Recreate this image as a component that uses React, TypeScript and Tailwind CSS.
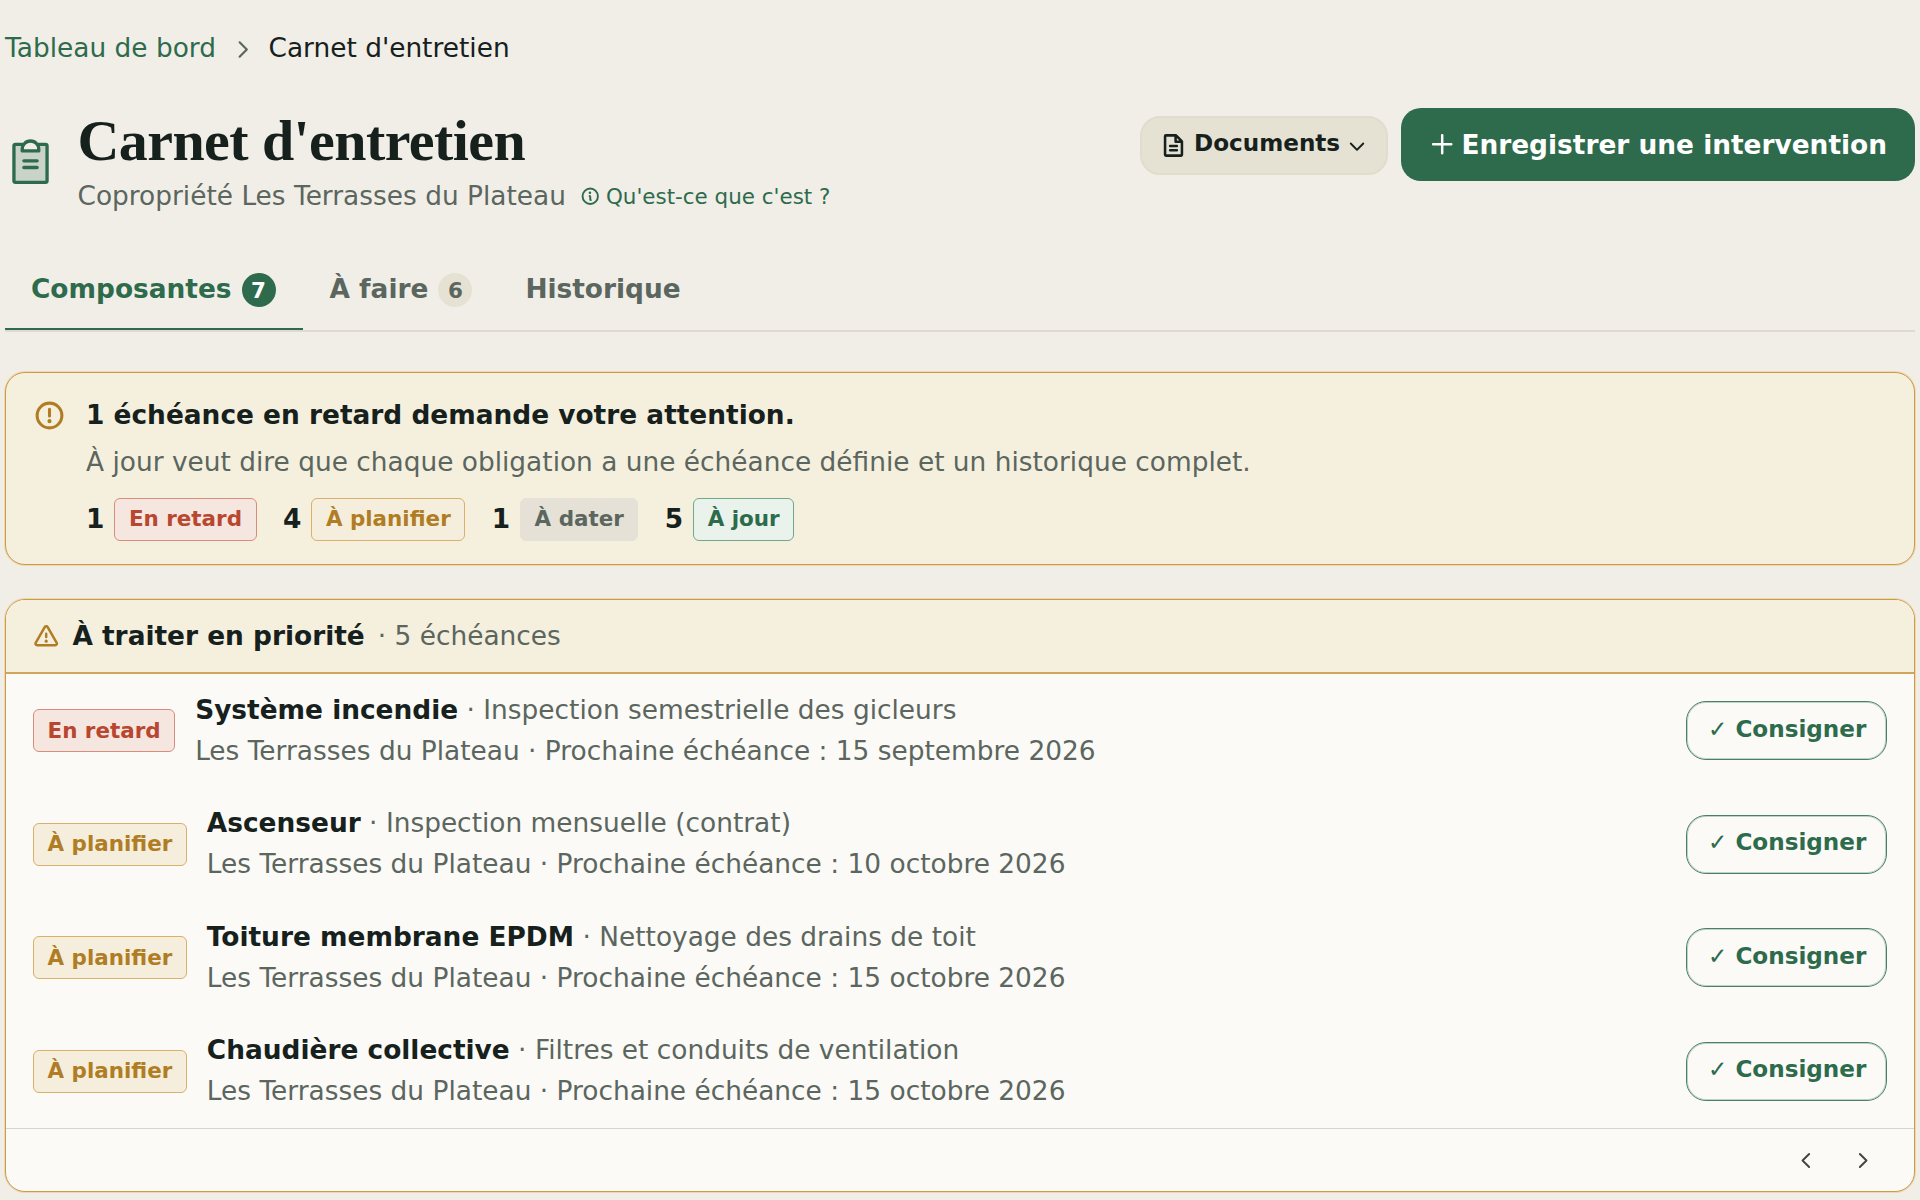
import React from 'react';
import {
  PiCaretDownBold,
  PiCaretLeftBold,
  PiCaretRightBold,
  PiClipboardTextDuotone,
  PiFileTextBold,
  PiInfoBold,
  PiPlusBold,
  PiWarningBold,
  PiWarningCircleBold,
} from 'react-icons/pi';

type Status = 'late' | 'plan' | 'date' | 'ok';

const badgeStyles: Record<Status, string> = {
  late: 'bg-[#f6e6e0] border-[#d98b7c] text-[#b8472f]',
  plan: 'bg-[#f5eedc] border-[#dab06a] text-[#b07d24]',
  date: 'bg-[#e6e1d6] border-[#e6e1d6] text-[#5b665f]',
  ok: 'bg-[#e9f2eb] border-[#6fa88b] text-[#2d6b4c]',
};

const badgeLabels: Record<Status, string> = {
  late: 'En retard',
  plan: 'À planifier',
  date: 'À dater',
  ok: 'À jour',
};

function Badge({ status }: { status: Status }) {
  return (
    <span
      className={`inline-flex h-[43px] shrink-0 items-center rounded-[6px] border px-[13.5px] pb-[1px] text-[21.45px] font-bold leading-none ${badgeStyles[status]}`}
    >
      {badgeLabels[status]}
    </span>
  );
}

const summary: { count: number; status: Status }[] = [
  { count: 1, status: 'late' },
  { count: 4, status: 'plan' },
  { count: 1, status: 'date' },
  { count: 5, status: 'ok' },
];

const rows: { status: Status; name: string; task: string; due: string }[] = [
  { status: 'late', name: 'Système incendie', task: 'Inspection semestrielle des gicleurs', due: '15 septembre 2026' },
  { status: 'plan', name: 'Ascenseur', task: 'Inspection mensuelle (contrat)', due: '10 octobre 2026' },
  { status: 'plan', name: 'Toiture membrane EPDM', task: 'Nettoyage des drains de toit', due: '15 octobre 2026' },
  { status: 'plan', name: 'Chaudière collective', task: 'Filtres et conduits de ventilation', due: '15 octobre 2026' },
];

export default function App() {
  return (
    <div className="h-[1200px] w-[1920px] overflow-hidden whitespace-nowrap bg-[#f1eee8] pl-[5px] pr-[5px] font-['DejaVu_Sans',sans-serif] text-[26.4px] leading-[41px] text-[#16211d]">
      {/* Fil d'Ariane */}
      <nav className="flex h-[108px] items-start pt-[27px]">
        <a className="text-[#2d6b4c]">Tableau de bord</a>
        <PiCaretRightBold className="ml-[15px] mr-[14.5px] mt-[11px] size-[23px] text-[#5b665f]" />
        <span>Carnet d'entretien</span>
      </nav>

      {/* En-tête */}
      <header className="flex h-[152px] items-start">
        <PiClipboardTextDuotone className="-ml-[1px] mt-[28px] size-[53px] text-[#2d6b4c]" />
        <div className="ml-[20.5px]">
          <h1 className="-mt-[1px] font-['Liberation_Serif',serif] text-[58px] font-bold leading-[68px] tracking-[-0.01em]">
            Carnet d'entretien
          </h1>
          <div className="-mt-[1px] flex items-center text-[#5b665f]">
            <span>Copropriété Les Terrasses du Plateau</span>
            <span className="ml-[14px] mt-[2px] flex items-center gap-[5.5px] text-[21.45px] text-[#2d6b4c]">
              <PiInfoBold className="size-[20.5px]" />
              Qu'est-ce que c'est ?
            </span>
          </div>
        </div>
        <div className="ml-auto flex gap-[13px]">
          <button className="mt-[8px] flex h-[59px] w-[248px] items-center rounded-[20px] border-2 border-[#e1ddcc] bg-[#e5e1d3] pl-[18px] text-[23.1px] font-bold">
            <PiFileTextBold className="mr-[7px] size-[27px]" />
            <span className="-mt-[4px]">Documents</span>
            <PiCaretDownBold className="ml-[7px] size-[20px]" />
          </button>
          <button className="flex h-[73px] w-[514px] items-center rounded-[20px] bg-[#2d6b4c] pl-[28px] font-bold text-white">
            <PiPlusBold className="mr-[6px] size-[26.4px]" />
            Enregistrer une intervention
          </button>
        </div>
      </header>

      {/* Onglets */}
      <div className="flex h-[72px] border-b-2 border-[#dfdacd] font-bold text-[#5b665f]">
        <div className="flex h-[70px] w-[298px] items-start border-b-2 border-[#2d6b4c] pl-[26px] pt-[8px] text-[#2d6b4c]">
          Composantes
          <span className="ml-[10px] mt-[5px] flex size-[34px] items-center justify-center rounded-full bg-[#2d6b4c] text-[21.45px] text-white">7</span>
        </div>
        <div className="flex items-start pl-[26.5px] pt-[8px]">
          À faire
          <span className="ml-[10px] mt-[5px] flex size-[34px] items-center justify-center rounded-full bg-[#e5e1d3] text-[21.45px]">6</span>
        </div>
        <div className="pl-[53px] pt-[8px]">Historique</div>
      </div>

      {/* Alerte */}
      <section className="mt-[40px] flex h-[193px] rounded-[20px] border border-[#cf9a46] bg-[#f5f0de] pl-[27px] pt-[21px] shadow-[0_0_0_1px_#ead8b6]">
        <PiWarningCircleBold className="mt-[5px] size-[33px] text-[#b07d24]" />
        <div className="ml-[20px]">
          <p className="font-bold">1 échéance en retard demande votre attention.</p>
          <p className="mt-[6px] text-[#5b665f]">
            À jour veut dire que chaque obligation a une échéance définie et un historique complet.
          </p>
          <div className="mt-[16px] flex gap-[26.5px]">
            {summary.map(({ count, status }) => (
              <div key={status} className="flex items-center gap-[10px]">
                <b className="-mt-[2px]">{count}</b>
                <Badge status={status} />
              </div>
            ))}
          </div>
        </div>
      </section>

      {/* Priorités */}
      <section className="mt-[34px] h-[593px] overflow-hidden rounded-[20px] border border-[#cf9a46] bg-[#fcfaf6] shadow-[0_0_0_1px_#ead8b6]">
        <div className="flex h-[74px] items-center border-b-2 border-[#d3a55a] bg-[#f5efde] pb-[1px] pl-[27px]">
          <PiWarningBold className="mr-[13px] mt-[1px] size-[26.4px] text-[#b07d24]" />
          <b>À traiter en priorité</b>
          <span className="ml-[13px] text-[#5b665f]">· 5 échéances</span>
        </div>
        {rows.map(({ status, name, task, due }) => (
          <div key={name} className="flex h-[113.5px] items-center pl-[27px] pr-[27px]">
            <Badge status={status} />
            <div className="-mt-[2px] ml-[20px] text-[#5b665f]">
              <p>
                <b className="text-[#16211d]">{name}</b> · {task}
              </p>
              <p>Les Terrasses du Plateau · Prochaine échéance : {due}</p>
            </div>
            <button className="ml-auto flex h-[59px] w-[201px] items-center rounded-[20px] border border-[#4b8068] pb-[3px] pl-[21px] text-[23.1px] font-bold text-[#2d6b4c] shadow-[inset_0_0_0_1px_#bfd2c6]">
              ✓ Consigner
            </button>
          </div>
        ))}
        <div className="flex h-[63px] items-center justify-end gap-[35px] border-t border-[#d8d5c9] pr-[41px] text-[#44443e]">
          <PiCaretLeftBold className="size-[21px]" />
          <PiCaretRightBold className="size-[21px]" />
        </div>
      </section>
    </div>
  );
}
